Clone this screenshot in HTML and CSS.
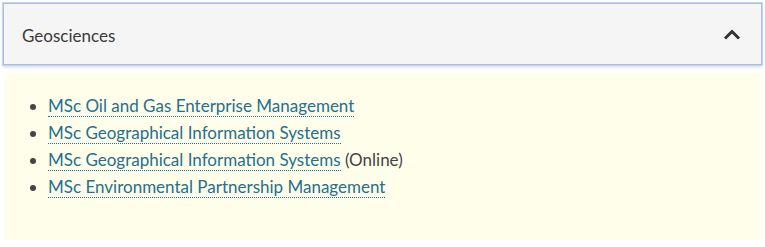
FILE: index.html
```html
<!DOCTYPE html>
<html lang="en">
<head>
<meta charset="utf-8">
<link rel="stylesheet" href="styles.css">
<title>Geosciences</title>
</head>
<body>
<div class="accordion">
  <div class="acc-header">
    <span class="acc-title">Geosciences</span>
    <svg class="chev" width="18" height="11" viewBox="0 0 18 11"><path d="M2 9.5 L9 2.5 L16 9.5" fill="none" stroke="#333" stroke-width="3"/></svg>
  </div>
  <div class="acc-body">
    <ul class="prog-list">
      <li><a href="#">MSc Oil and Gas Enterprise Management</a></li>
      <li><a href="#">MSc Geographical Information Systems</a></li>
      <li><a href="#">MSc Geographical Information Systems</a> (Online)</li>
      <li><a href="#">MSc Environmental Partnership Management</a></li>
    </ul>
  </div>
</div>
</body>
</html>
```
FILE: styles.css
```css
html, body { margin: 0; padding: 0; background: #fff; }
body { font-family: Lato, "Open Sans", sans-serif; color: #444; }
.accordion { padding: 3px 3px 0 3px; }
.acc-header {
  height: 62px;
  box-sizing: border-box;
  border: 1px solid #a9bedf;
  box-shadow: 0 0 0 1px #c8d6ec, 0 2px 3px rgba(120,140,180,0.35);
  background: #f5f5f5;
  display: flex;
  align-items: center;
  justify-content: space-between;
  padding: 0 20px 0 18px;
}
.acc-title { font-size: 17px; color: #3a3a3a; padding-top: 2px; }
.chev { display: block; }
.acc-body {
  margin-top: 8px;
  margin-left: 1px;
  margin-right: 1px;
  background: #fefeea;
  height: 167px;
  padding: 19px 0 0 0;
  box-sizing: border-box;
}
.prog-list { margin: 0; padding: 0 0 0 44px; font-size: 17px; line-height: 27px; color: #444; }
.prog-list li::marker { color: #444; }
.prog-list a {
  color: #24708f;
  text-decoration: none;
  border-bottom: 1px dotted #24708f;
}
```
